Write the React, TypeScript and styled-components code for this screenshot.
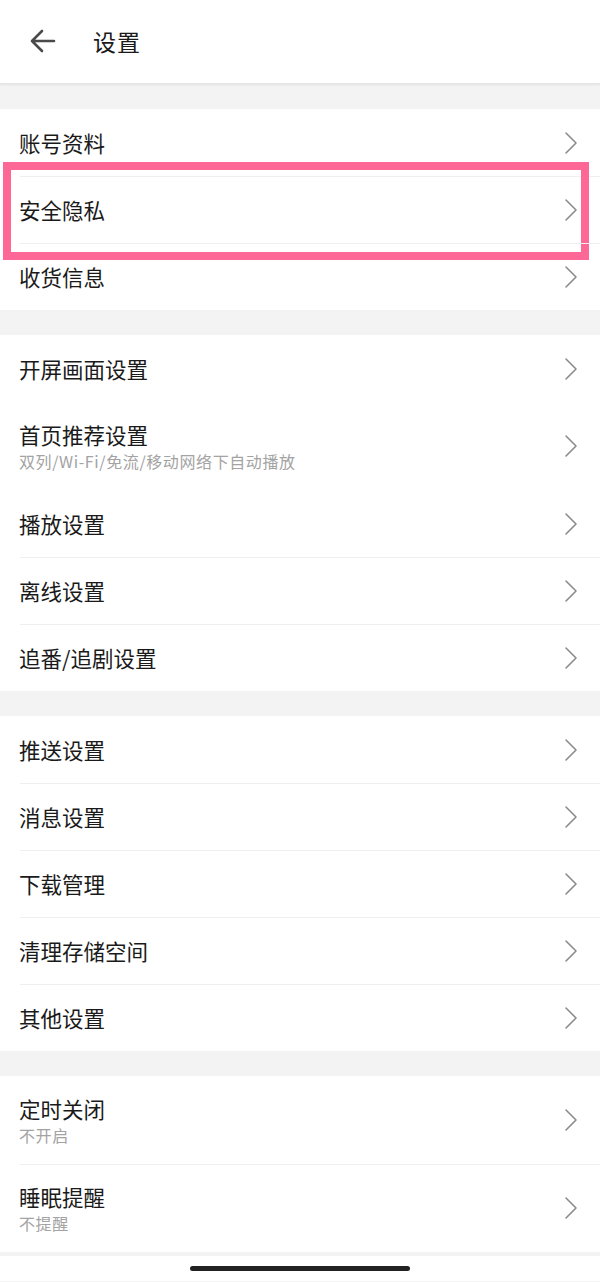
import React from 'react';
import styled, { createGlobalStyle } from 'styled-components';

const GlobalStyle = createGlobalStyle`
  html, body {
    margin: 0;
    padding: 0;
    background: #f3f3f3;
    font-family: "Noto Sans CJK SC", "Noto Sans", sans-serif;
    -webkit-font-smoothing: antialiased;
  }
`;

const Page = styled.div`
  width: 600px;
  min-height: 1282px;
  background: #f3f3f3;
  display: flex;
  flex-direction: column;
  gap: 25px;
`;

const Header = styled.header`
  height: 84px;
  background: #fff;
  display: flex;
  align-items: center;
  padding-left: 29px;
  padding-bottom: 2px;
  gap: 36px;
  box-shadow: 0 1px 2px rgba(0, 0, 0, 0.08);
  border-bottom: 1px solid #e6e6e6;
  box-sizing: border-box;
`;

const BackButton = styled.div`
  width: 28px;
  height: 28px;
  display: flex;
  align-items: center;
  justify-content: center;
`;

const Title = styled.h1`
  margin: 0;
  font-size: 23px;
  font-weight: 400;
  color: #1a1a1a;
  letter-spacing: 1px;
`;

const Group = styled.section`
  background: #fff;
  display: flex;
  flex-direction: column;
`;

const Row = styled.div<{ $tall?: boolean }>`
  position: relative;
  box-sizing: border-box;
  height: ${(p) => (p.$tall ? '88px' : '67px')};
  padding: 0 22px 0 19px;
  display: flex;
  align-items: center;
  justify-content: space-between;

  & + &::before {
    content: '';
    position: absolute;
    top: 0;
    left: 20px;
    right: 0;
    height: 1px;
    background: #efefef;
  }
`;

const Texts = styled.div`
  display: flex;
  flex-direction: column;
`;

const Label = styled.span`
  font-size: 21.5px;
  line-height: 30px;
  color: #1a1a1a;
`;

const Sub = styled.span`
  font-size: 16px;
  line-height: 22px;
  letter-spacing: 0.6px;
  color: #a3a3a3;
`;

const Highlight = styled.div`
  position: absolute;
  top: -14px;
  bottom: -17px;
  left: 3px;
  right: 11px;
  border: 8.5px solid #fd6896;
  pointer-events: none;
`;

const Footer = styled.div`
  margin-top: -21px;
  height: 25px;
  background: #fff;
  display: flex;
  align-items: center;
  justify-content: center;
`;

const HomeBar = styled.div`
  width: 220px;
  height: 5px;
  border-radius: 3px;
  background: #222;
`;

const Chevron = () => (
  <svg width="14" height="24" viewBox="0 0 14 24">
    <polyline
      points="2,2 12,12 2,22"
      fill="none"
      stroke="#8c8c8c"
      strokeWidth="1.6"
      strokeLinecap="round"
      strokeLinejoin="round"
    />
  </svg>
);

const BackArrow = () => (
  <svg width="28" height="26" viewBox="0 0 28 26">
    <path
      d="M25 13H3M13 3L3 13l10 10"
      fill="none"
      stroke="#4a4a4a"
      strokeWidth="2.6"
      strokeLinecap="round"
      strokeLinejoin="round"
    />
  </svg>
);

interface Item {
  label: string;
  sub?: string;
  highlight?: boolean;
}

const groups: Item[][] = [
  [{ label: '账号资料' }, { label: '安全隐私', highlight: true }, { label: '收货信息' }],
  [
    { label: '开屏画面设置' },
    { label: '首页推荐设置', sub: '双列/Wi-Fi/免流/移动网络下自动播放' },
    { label: '播放设置' },
    { label: '离线设置' },
    { label: '追番/追剧设置' },
  ],
  [
    { label: '推送设置' },
    { label: '消息设置' },
    { label: '下载管理' },
    { label: '清理存储空间' },
    { label: '其他设置' },
  ],
  [
    { label: '定时关闭', sub: '不开启' },
    { label: '睡眠提醒', sub: '不提醒' },
  ],
];

const SettingRow: React.FC<{ item: Item }> = ({ item }) => (
  <Row $tall={!!item.sub}>
    <Texts>
      <Label>{item.label}</Label>
      {item.sub && <Sub>{item.sub}</Sub>}
    </Texts>
    <Chevron />
    {item.highlight && <Highlight />}
  </Row>
);

const App: React.FC = () => (
  <>
    <GlobalStyle />
    <Page>
      <Header>
        <BackButton>
          <BackArrow />
        </BackButton>
        <Title>设置</Title>
      </Header>
      {groups.map((g, i) => (
        <Group key={i}>
          {g.map((item) => (
            <SettingRow item={item} key={item.label} />
          ))}
        </Group>
      ))}
      <Footer>
        <HomeBar />
      </Footer>
    </Page>
  </>
);

export default App;
